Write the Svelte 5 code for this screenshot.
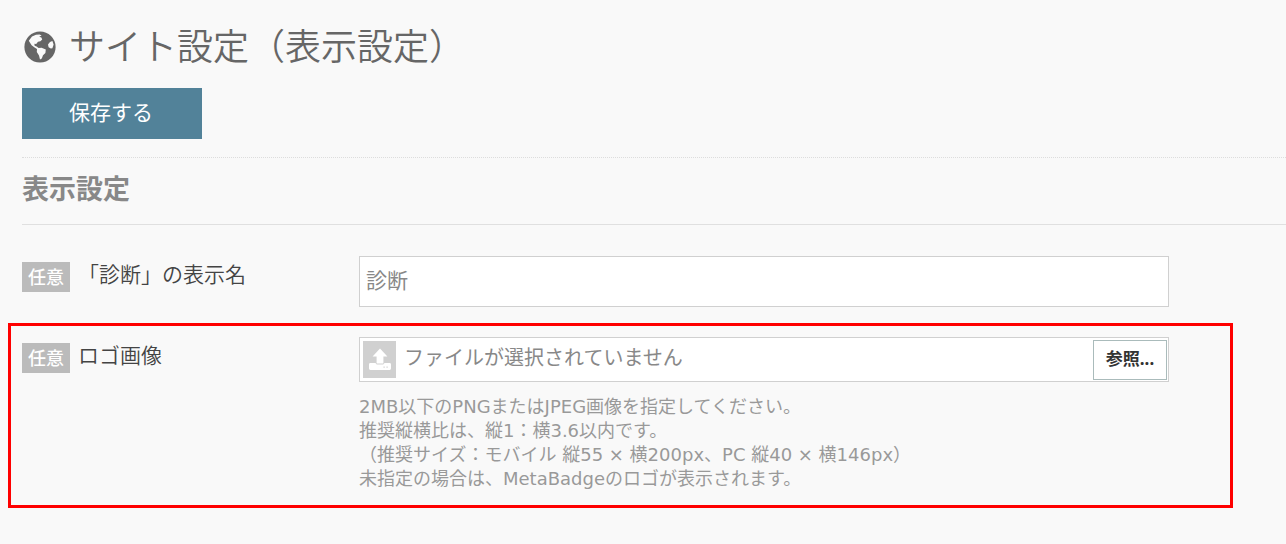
<script lang="ts">
    let displayName = '診断';
    let fileInput: HTMLInputElement;
    let files: FileList | null = null;

    $: fileName = files && files.length > 0 ? files[0].name : 'ファイルが選択されていません';
</script>

<form class="page" on:submit|preventDefault>
    <h1>
        <svg class="globe" viewBox="0 0 32 32" aria-hidden="true">
            <circle cx="16" cy="16" r="15.6" fill="#666" />
            <path fill="#f9f9f9" d="M8 5.6 L12 3.8 L15.6 3.4 L17.6 4.4 L15.2 5.8 L17.4 6.4 L18.2 8.6 L16.4 10.2 L14 10.8 L12.2 13 L10.4 12.8 L10.6 14.8 L12.6 15.4 L14.6 17 L17.6 16.8 L21.8 18.6 L21.4 22 L19 24.2 L17.8 27.6 L16 28.6 L15 24.6 L12.8 21 L13 18 L10.6 16.4 L7.6 14.2 L4.8 9.8 Z" />
            <path fill="#f9f9f9" d="M28.4 10 L26 11 L24 13.6 L24.6 16.2 L26.8 17.6 L28.4 17.2 L29.6 13.6 Z" />
        </svg>
        <span>サイト設定（表示設定）</span>
    </h1>

    <button class="save" type="submit">保存する</button>

    <h2>表示設定</h2>

    <div class="rows">
        <div class="row">
            <div class="caption">
                <span class="badge">任意</span>
                <label for="display-name">「診断」の表示名</label>
            </div>
            <div class="field">
                <input id="display-name" class="text" type="text" bind:value={displayName} />
            </div>
        </div>

        <div class="row marked">
            <div class="caption">
                <span class="badge">任意</span>
                <label for="logo-file">ロゴ画像</label>
            </div>
            <div class="field">
                <div class="file">
                    <input id="logo-file" type="file" accept="image/png,image/jpeg" bind:this={fileInput} bind:files />
                    <span class="upload">
                        <svg viewBox="0 0 22 23" aria-hidden="true">
                            <path fill="#fff" d="M11 0.6 L18.4 8.4 H14.4 V15.4 H7.6 V8.4 H3.6 Z" />
                            <path fill="#fff" d="M1.4 15 H6.6 Q6.8 16.4 8 16.4 H14 Q15.2 16.4 15.4 15 H20.6 Q22 15 22 16.4 V20.6 Q22 22 20.6 22 H1.4 Q0 22 0 20.6 V16.4 Q0 15 1.4 15 Z" />
                            <path fill="#d0d0d0" d="M14.5 18.5 h1.2 v1.2 h-1.2 z M17.5 18.5 h1.2 v1.2 h-1.2 z" />
                        </svg>
                    </span>
                    <span class="file-name">{fileName}</span>
                    <button class="browse" type="button" on:click={() => fileInput.click()}>参照...</button>
                </div>
                <p class="help">
                    2MB以下のPNGまたはJPEG画像を指定してください。<br />
                    推奨縦横比は、縦1：横3.6以内です。<br />
                    （推奨サイズ：モバイル 縦55 × 横200px、PC 縦40 × 横146px）<br />
                    未指定の場合は、MetaBadgeのロゴが表示されます。
                </p>
            </div>
        </div>
    </div>
</form>

<style>
    :global(body) {
        background: #f9f9f9;
    }

    .page {
        padding: 20px 0 20px 22px;
        font-family: "Noto Sans", "Noto Sans CJK JP", sans-serif;
        color: #444;
    }

    h1 {
        display: flex;
        align-items: center;
        gap: 13px;
        margin: 0 0 14px;
        padding-left: 2px;
        color: #666;
        font-size: 36px;
        font-weight: 350;
        line-height: 54px;
    }

    .globe {
        width: 32px;
        height: 32px;
    }

    button,
    input {
        box-sizing: border-box;
        font-family: inherit;
    }

    .save {
        display: block;
        width: 180px;
        height: 51px;
        padding: 0 2px 6px 0;
        border: none;
        background: #528299;
        color: #fff;
        font-size: 21px;
        cursor: pointer;
    }

    h2 {
        margin: 18px 0 0;
        padding: 11px 0 15px;
        border-top: 1px dotted #ddd;
        border-bottom: 1px solid #e0e0e0;
        color: #888;
        font-size: 27px;
        font-weight: bold;
        line-height: 40px;
    }

    .rows {
        padding: 31px 53px 0 0;
    }

    .row {
        display: flex;
        padding-right: 64px;
    }

    .marked {
        margin: 16px 0 0 -14px;
        padding: 11px 61px 14px 11px;
        border: 3px solid #f00;
    }

    .caption {
        display: flex;
        flex: 0 0 337px;
        align-items: flex-start;
        gap: 8px;
        padding-top: 6px;
    }

    .badge {
        padding: 0 6px;
        background: #bbb;
        color: #fff;
        font-size: 18px;
        font-weight: 500;
        line-height: 30px;
    }

    .caption label {
        font-size: 21px;
        font-weight: 350;
        line-height: 24px;
    }

    .field {
        flex: 1;
        min-width: 0;
    }

    .text {
        display: block;
        width: 100%;
        height: 51px;
        padding: 0 6px 6px;
        border: 1px solid #d0d0d0;
        background: #fff;
        color: #888;
        font-size: 21px;
    }

    .file {
        position: relative;
        display: flex;
        align-items: center;
        height: 43px;
        padding: 0 1px 0 3px;
        border: 1px solid #d0d0d0;
        background: #fff;
    }

    /* the native control stays focusable under the styled one */
    .file input {
        position: absolute;
        inset: 0;
        width: 100%;
        opacity: 0;
    }

    .upload {
        display: flex;
        align-items: center;
        justify-content: center;
        width: 33px;
        height: 37px;
        background: #d0d0d0;
    }

    .upload svg {
        width: 22px;
        height: 23px;
    }

    .file-name {
        flex: 1;
        padding: 0 8px 4px;
        color: #888;
        font-size: 20px;
        line-height: 28px;
    }

    .browse {
        position: relative;
        width: 74px;
        height: 40px;
        padding: 0 0 4px;
        border: 1px solid #abb;
        background: #fff;
        color: #333;
        font-size: 17px;
        font-weight: bold;
        cursor: pointer;
    }

    .help {
        margin: 13px 0 0;
        color: #999;
        font-family: "DejaVu Sans", "Noto Sans CJK JP", sans-serif;
        font-size: 18px;
        line-height: 24px;
    }
</style>
